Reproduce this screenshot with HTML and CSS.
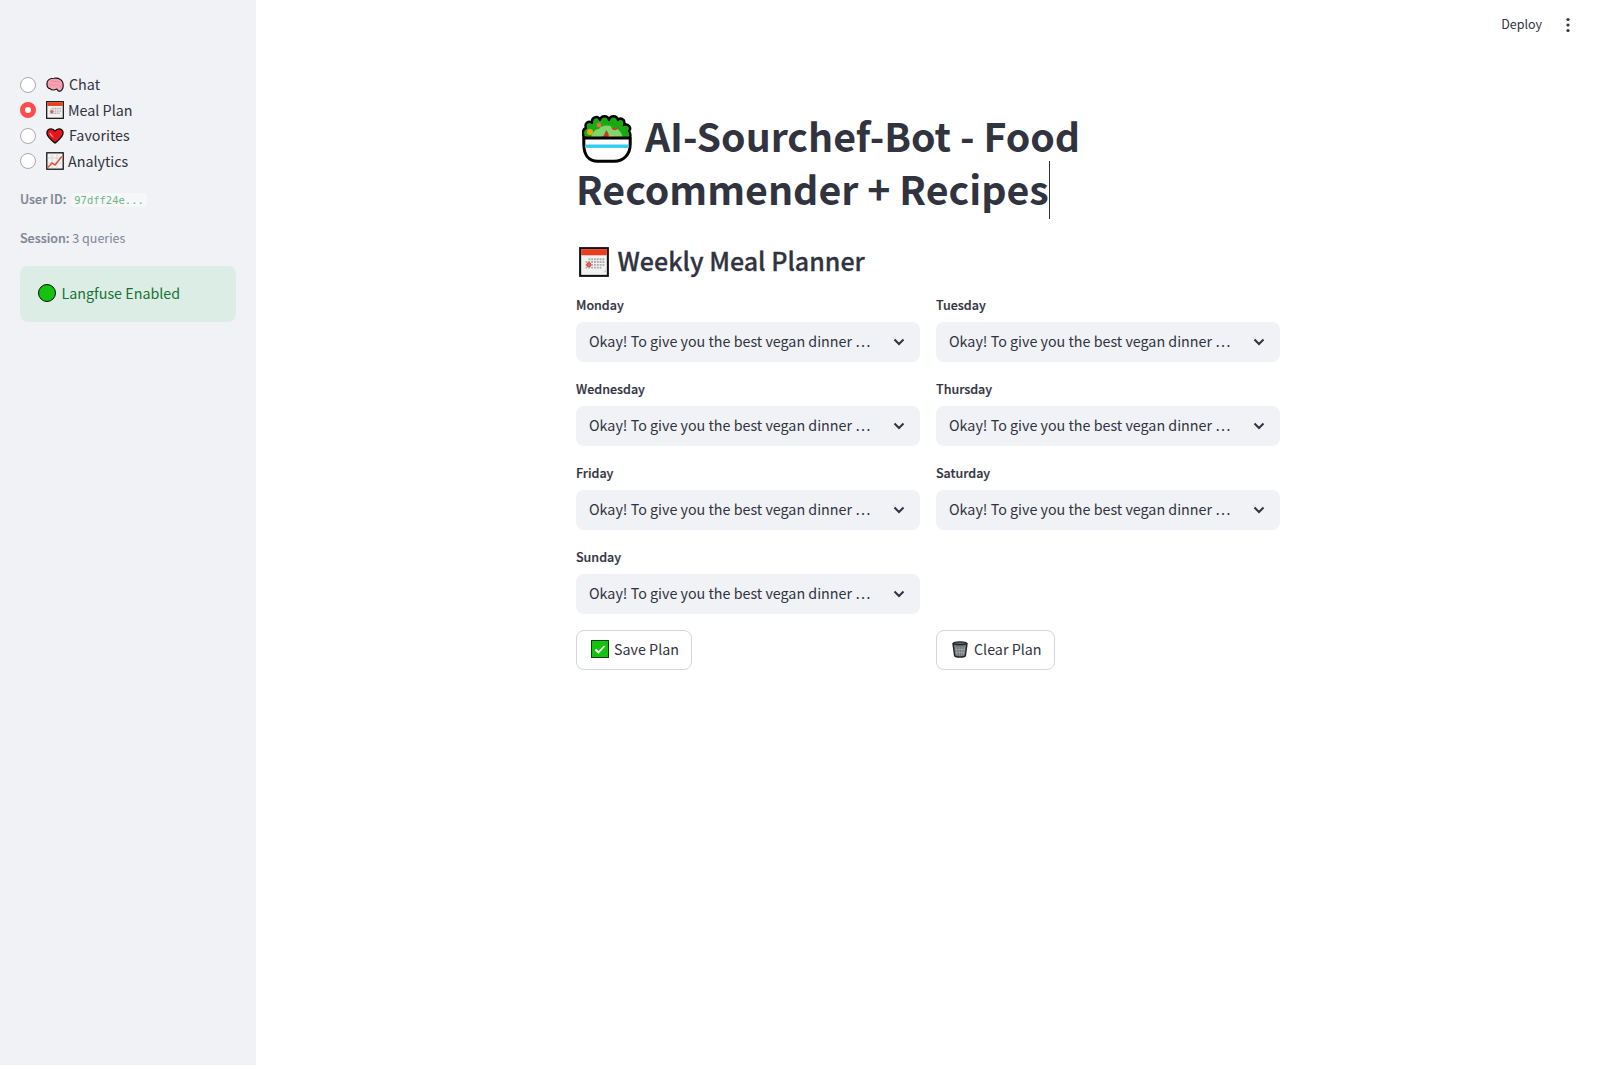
FILE: index.html
```html
<!DOCTYPE html>
<html lang="en">
<head>
<meta charset="utf-8">
<title>AI-Sourchef-Bot</title>
<link rel="stylesheet" href="styles.css">
</head>
<body>
<svg class="defs" width="0" height="0" aria-hidden="true">
  <defs>
    <symbol id="cal" viewBox="0 0 32 32">
      <rect x="1.2" y="1.2" width="29.6" height="29.6" fill="#f1f1f1" stroke="#111" stroke-width="2.2"/>
      <rect x="2.3" y="2.3" width="27.4" height="6.5" fill="#ea3d1c"/>
      <g fill="#adadad">
        <path d="M10 12h2v2h-2zM13 12h2v2h-2zM16 12h2v2h-2zM19 12h2v2h-2zM22 12h2v2h-2zM25 12h2v2h-2z"/>
        <path d="M7 15h2v2H7zM10 15h2v2h-2zM13 15h2v2h-2zM16 15h2v2h-2zM19 15h2v2h-2zM22 15h2v2h-2zM25 15h2v2h-2z"/>
        <path d="M7 18h2v2H7zM13 18h2v2h-2zM16 18h2v2h-2zM19 18h2v2h-2zM22 18h2v2h-2zM25 18h2v2h-2z"/>
        <path d="M7 21h2v2H7zM10 21h2v2h-2zM13 21h2v2h-2zM16 21h2v2h-2zM19 21h2v2h-2zM22 21h2v2h-2z"/>
      </g>
      <circle cx="10.5" cy="19" r="2.2" fill="#ef6a50" stroke="#d9321b" stroke-width="1"/>
      <path d="M26 27l3-3v3z" fill="#c9c9c9"/>
    </symbol>
    <symbol id="brain" viewBox="0 0 20 17">
      <path d="M1 7C1 3 5 1 9 1c5-1 10 2 10 7 .5 4-1.500 7.500-4 7.500-2 0-2.500-1.500-3-2.500-3 1.500-6 1-7.500-.5C2 12 1 10 1 7z" fill="#f5a3b2" stroke="#111" stroke-width="1.300" stroke-linejoin="round"/>
      <path d="M5 4.500c2-1.200 3.500-.4 5 .4 1.600-.8 3.400-.4 5 1M4 8.500c1.600-.8 3-.4 4.400.6 1.500-1 3-.8 4.600 0M15.500 8.500c.5 1 .5 2-.2 3" fill="none" stroke="#e58396" stroke-width=".9"/>
    </symbol>
    <symbol id="heart" viewBox="0 0 20 18">
      <path d="M10 16.800C6 13.600 1 10.200 1 5.800 1 3 3.100 1 5.600 1 7.500 1 9 2 10 3.600 11 2 12.500 1 14.400 1 16.900 1 19 3 19 5.800c0 4.400-5 7.800-9 11z" fill="#e8141c" stroke="#111" stroke-width="1.500" stroke-linejoin="round"/>
      <path d="M4.500 6c.6 1.600 1.800 3 3.300 4" fill="none" stroke="#f79aa0" stroke-width="1.200" stroke-linecap="round"/>
    </symbol>
    <symbol id="chart" viewBox="0 0 18 18">
      <rect x=".8" y=".8" width="16.400" height="16.400" fill="#f4f4f4" stroke="#111" stroke-width="1.300"/>
      <path d="M1.500 6h15M1.500 11h15M6 1.500v15M11 1.500v15" stroke="#cfcfcf" stroke-width=".8"/>
      <path d="M1.800 15.500l4.200-4.500 3 2 6.800-8.500" fill="none" stroke="#ea4a2e" stroke-width="1.400"/>
    </symbol>
    <symbol id="salad" viewBox="0 0 50 48">
      <path d="M3 25C0 20 0 14 4 13 2 8 7 5 10 8 9 2 16 0 18 5 19 0 26 0 27 5 28 0 35 0 36 5 38 2 44 4 42 10 46 8 50 13 47 16 49 18 49 22 47 25z" fill="#1aab12" stroke="#000" stroke-width="2.400" stroke-linejoin="round"/>
      <path d="M9 24c0-5 4-10 8-10 2-4 11-5 14-1 5-1 10 6 10 11z" fill="#7fd66e"/>
      <circle cx="8" cy="17" r="3" fill="#f1a20a"/>
      <circle cx="17" cy="10" r="2.400" fill="#ee6a50"/>
      <circle cx="30" cy="23" r="3" fill="#f1c00c"/>
      <path d="M17 23c3 0 6-3 7-8 3 3 4 7 1 9h-8z" fill="#c7392f"/>
      <path d="M29 11c2 3 6 3 8 0-1 5-7 6-8 0z" fill="#c7392f"/>
      <path d="M1.800 23h46.400v6c0 11-7 17.300-16 17.300h-16.400c-9 0-14-6.300-14-17.300z" fill="#fff" stroke="#000" stroke-width="3" stroke-linejoin="round"/>
      <rect x="3.300" y="29.500" width="43.400" height="3.400" fill="#33cdf2"/>
    </symbol>
    <symbol id="check" viewBox="0 0 18 18">
      <rect x=".5" y=".5" width="17" height="17" fill="#14c30f" stroke="#0b3d0a"/>
      <path d="M4.500 9.500l3 3 6-6.500" fill="none" stroke="#fff" stroke-width="1.800"/>
    </symbol>
    <symbol id="trash" viewBox="0 0 18 18">
      <path d="M2 3.500C3 1.300 15 1.300 16 3.500l-1.600 12c-.4 2-10.400 2-10.800 0z" fill="#72787c" stroke="#222" stroke-width="1.400"/>
      <path d="M2 3.500c2 1.500 12 1.500 14 0" fill="#3f4447" stroke="#222" stroke-width="1.200"/>
      <path d="M5 7l1 8M8 7l.5 8.500M11 7l-.5 8.500M13.500 7l-1 8M4 9.500h10M4.500 12.500h9" stroke="#a3a9ac" stroke-width=".7"/>
    </symbol>
  </defs>
</svg>

<div class="app">
  <aside class="sidebar">
    <div class="radio-group">
      <div class="radio"><span class="dot"></span><svg class="ico-s"><use href="#brain"/></svg><span class="rlabel">Chat</span></div>
      <div class="radio"><span class="dot on"></span><svg class="ico-s"><use href="#cal"/></svg><span class="rlabel tight">Meal Plan</span></div>
      <div class="radio"><span class="dot"></span><svg class="ico-s"><use href="#heart"/></svg><span class="rlabel">Favorites</span></div>
      <div class="radio"><span class="dot"></span><svg class="ico-s"><use href="#chart"/></svg><span class="rlabel tight">Analytics</span></div>
    </div>
    <p class="meta userline"><strong>User ID:</strong> <code>97dff24e...</code></p>
    <p class="meta session"><strong>Session:</strong> 3 queries</p>
    <div class="success"><span class="greendot"></span>Langfuse Enabled</div>
  </aside>

  <main class="main">
    <header class="topbar">
      <span class="deploy">Deploy</span>
      <svg class="kebab" viewBox="0 0 4 16" width="4" height="16"><circle cx="2" cy="2.500" r="1.600"/><circle cx="2" cy="8" r="1.600"/><circle cx="2" cy="13.500" r="1.600"/></svg>
    </header>
    <div class="content">
      <h1 class="title"><svg class="ico-title"><use href="#salad"/></svg> AI-Sourchef-Bot - Food Recommender + Recipes<span class="caret"></span></h1>
      <h2 class="subtitle"><svg class="ico-sub"><use href="#cal"/></svg>Weekly Meal Planner</h2>
      <div class="grid">
        <div class="field"><label>Monday</label><div class="select"><span class="val">Okay! To give you the best vegan dinner …</span><svg class="chev" viewBox="0 0 12 8" width="12" height="8"><path d="M1.500 1.500L6 6l4.500-4.500"/></svg></div></div>
        <div class="field"><label>Tuesday</label><div class="select"><span class="val">Okay! To give you the best vegan dinner …</span><svg class="chev" viewBox="0 0 12 8" width="12" height="8"><path d="M1.500 1.500L6 6l4.500-4.500"/></svg></div></div>
        <div class="field"><label>Wednesday</label><div class="select"><span class="val">Okay! To give you the best vegan dinner …</span><svg class="chev" viewBox="0 0 12 8" width="12" height="8"><path d="M1.500 1.500L6 6l4.500-4.500"/></svg></div></div>
        <div class="field"><label>Thursday</label><div class="select"><span class="val">Okay! To give you the best vegan dinner …</span><svg class="chev" viewBox="0 0 12 8" width="12" height="8"><path d="M1.500 1.500L6 6l4.500-4.500"/></svg></div></div>
        <div class="field"><label>Friday</label><div class="select"><span class="val">Okay! To give you the best vegan dinner …</span><svg class="chev" viewBox="0 0 12 8" width="12" height="8"><path d="M1.500 1.500L6 6l4.500-4.500"/></svg></div></div>
        <div class="field"><label>Saturday</label><div class="select"><span class="val">Okay! To give you the best vegan dinner …</span><svg class="chev" viewBox="0 0 12 8" width="12" height="8"><path d="M1.500 1.500L6 6l4.500-4.500"/></svg></div></div>
        <div class="field"><label>Sunday</label><div class="select"><span class="val">Okay! To give you the best vegan dinner …</span><svg class="chev" viewBox="0 0 12 8" width="12" height="8"><path d="M1.500 1.500L6 6l4.500-4.500"/></svg></div></div>
        <div class="field empty"></div>
        <div class="action"><button class="btn"><svg class="ico-btn"><use href="#check"/></svg>Save Plan</button></div>
        <div class="action"><button class="btn"><svg class="ico-btn"><use href="#trash"/></svg>Clear Plan</button></div>
      </div>
    </div>
  </main>
</div>
</body>
</html>
```

FILE: styles.css
```css
* { box-sizing: border-box; }
html, body { margin: 0; height: 100%; }
body {
  font-family: "Noto Sans CJK SC", "Noto Sans CJK JP", "Open Sans", sans-serif;
  color: #31333f;
  background: #fff;
  font-size: 14.300px;
}
.defs { display: block; width: 0; height: 0; overflow: hidden; }
.app { display: flex; height: 1065px; }

.sidebar {
  width: 256px;
  flex: none;
  background: #f0f2f6;
  padding: 72px 20px 0;
}
.radio-group { display: flex; flex-direction: column; }
.radio { display: flex; align-items: center; height: 25.500px; }
.dot {
  width: 16px; height: 16px; border-radius: 50%;
  background: #fff; border: 1px solid #a9a9ae;
  margin-right: 10px; flex: none;
}
.dot.on { background: #fff; border: 5px solid #ff4b4b; }
.ico-s { width: 18px; height: 18px; flex: none; margin-right: 5px; }
.rlabel { font-size: 14.300px; line-height: 20px; padding-bottom: 2px; }
.rlabel.tight { margin-left: -1px; padding-bottom: 0; }
.meta { margin: 0; font-size: 12.500px; line-height: 20px; color: #808495; }
.meta strong { font-weight: 500; -webkit-text-stroke: .2px currentColor; }
.userline { margin-top: 15px; }
.userline code {
  font-family: "DejaVu Sans Mono", monospace;
  font-size: 10.500px;
  color: #6fb586;
  background: #f6f7f9;
  border-radius: 4px;
  padding: 1px 3px;
  margin-left: 2px;
}
.session { margin-top: 18px; }
.success {
  margin-top: 18px;
  height: 56px;
  width: 216px;
  border-radius: 8px;
  background: #dcede6;
  color: #177233;
  display: flex;
  align-items: center;
  padding: 0 0 2px 18px;
  line-height: 20px;
  font-size: 14.300px;
}
.greendot {
  width: 18px; height: 18px; border-radius: 50%;
  background: #14c30f; border: 1.500px solid #0b0b0b;
  margin-right: 5.500px; flex: none;
}

.main { flex: 1; min-width: 0; display: flex; flex-direction: column; }
.topbar {
  height: 48px;
  flex: none;
  display: flex;
  align-items: center;
  justify-content: flex-end;
  padding-right: 30px;
}
.deploy { font-size: 12.500px; margin-right: 24px; padding-bottom: 1px; }
.kebab { fill: #31333f; margin-top: 2px; }
.content { width: 704px; margin-left: 320px; padding-top: 60px; }
.title {
  margin: 0;
  font-size: 39.300px;
  line-height: 53px;
  font-weight: 700;
}
.ico-title { width: 50px; height: 48px; vertical-align: middle; margin: -10px 4px -6px 6px; }
.caret { display: inline-block; width: 1px; height: 58px; background: #31333f; vertical-align: middle; margin: -14px 0 -6px 0; }
.subtitle {
  margin: 26px 0 0;
  font-size: 25px;
  line-height: 40px;
  font-weight: 500;
  -webkit-text-stroke: .3px currentColor;
  display: flex;
  align-items: center;
}
.ico-sub { width: 30px; height: 30px; margin: 4px 8.500px 0 3px; }
.grid {
  display: grid;
  grid-template-columns: 344px 344px;
  column-gap: 16px;
  row-gap: 16px;
  margin-top: 14px;
}
.field label {
  display: block;
  font-size: 12.500px;
  font-weight: 500;
  -webkit-text-stroke: .2px currentColor;
  line-height: 20px;
  padding-top: 1px;
  box-sizing: content-box;
  margin-bottom: 7px;
}
.select {
  height: 40px;
  border-radius: 8px;
  background: #f0f2f6;
  display: flex;
  align-items: center;
  justify-content: space-between;
  padding: 0 15px 0 13px;
}
.val { font-size: 14.300px; white-space: nowrap; padding-bottom: 4px; }
.chev { fill: none; stroke: #31333f; stroke-width: 2; }
.btn {
  font: inherit;
  color: inherit;
  height: 40px;
  background: #fff;
  border: 1px solid #d5d6da;
  border-radius: 8px;
  padding: 0 12.500px 4px 14px;
  display: inline-flex;
  align-items: center;
  font-size: 14.300px;
}
.ico-btn { width: 18px; height: 18px; margin: 2px 5px 0 0; flex: none; }
```
